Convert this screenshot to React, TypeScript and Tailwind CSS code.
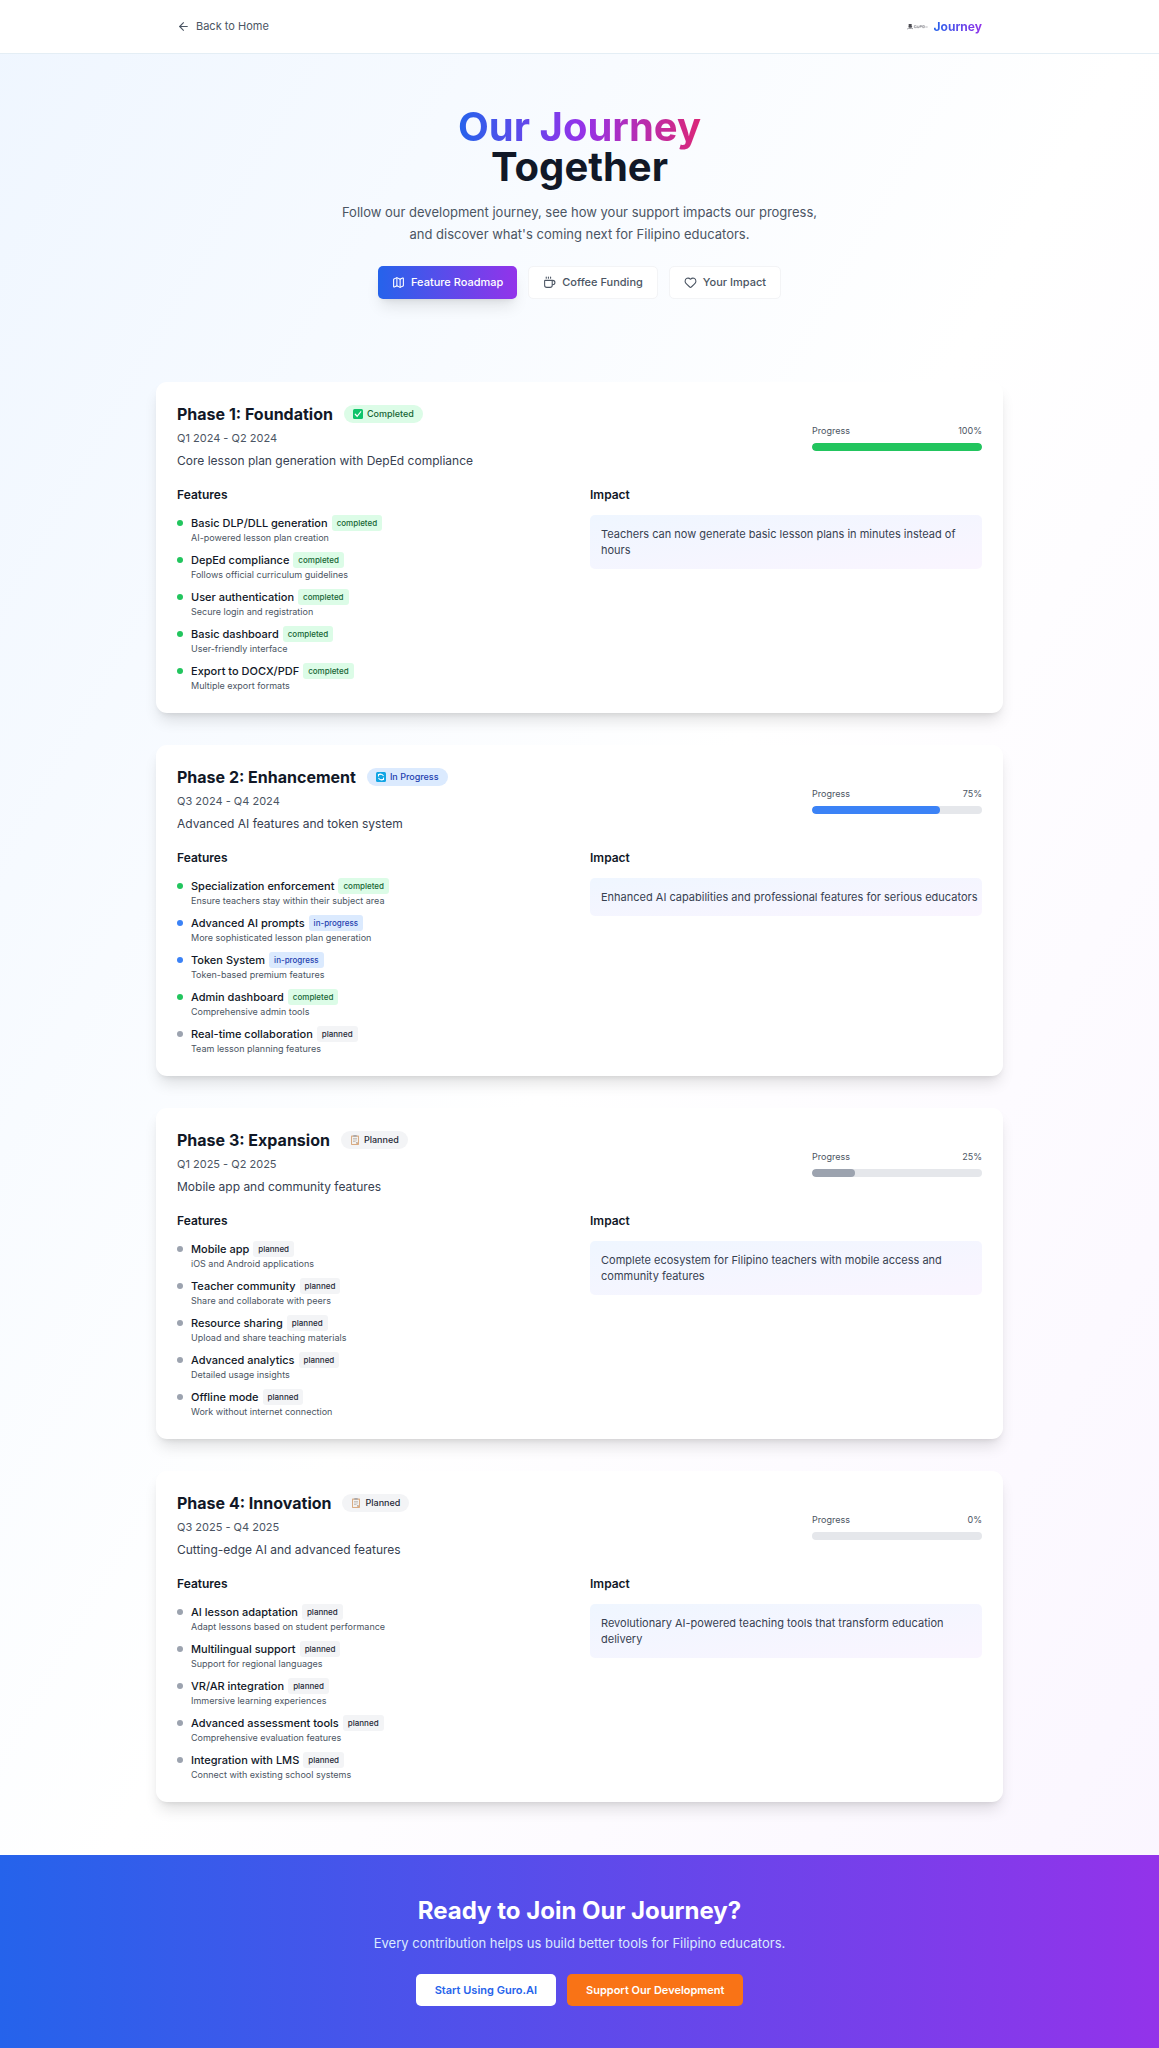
import React from "react";
import { ArrowLeft, Coffee, Heart, Map } from "lucide-react";

type Status = "completed" | "in-progress" | "planned";

interface Feature {
  name: string;
  detail: string;
  status: Status;
}

interface Phase {
  title: string;
  period: string;
  summary: string;
  status: Status;
  progress: number;
  impact: string;
  features: Feature[];
}

const phases: Phase[] = [
  {
    title: "Phase 1: Foundation",
    period: "Q1 2024 - Q2 2024",
    summary: "Core lesson plan generation with DepEd compliance",
    status: "completed",
    progress: 100,
    impact: "Teachers can now generate basic lesson plans in minutes instead of hours",
    features: [
      { name: "Basic DLP/DLL generation", detail: "AI-powered lesson plan creation", status: "completed" },
      { name: "DepEd compliance", detail: "Follows official curriculum guidelines", status: "completed" },
      { name: "User authentication", detail: "Secure login and registration", status: "completed" },
      { name: "Basic dashboard", detail: "User-friendly interface", status: "completed" },
      { name: "Export to DOCX/PDF", detail: "Multiple export formats", status: "completed" },
    ],
  },
  {
    title: "Phase 2: Enhancement",
    period: "Q3 2024 - Q4 2024",
    summary: "Advanced AI features and token system",
    status: "in-progress",
    progress: 75,
    impact: "Enhanced AI capabilities and professional features for serious educators",
    features: [
      { name: "Specialization enforcement", detail: "Ensure teachers stay within their subject area", status: "completed" },
      { name: "Advanced AI prompts", detail: "More sophisticated lesson plan generation", status: "in-progress" },
      { name: "Token System", detail: "Token-based premium features", status: "in-progress" },
      { name: "Admin dashboard", detail: "Comprehensive admin tools", status: "completed" },
      { name: "Real-time collaboration", detail: "Team lesson planning features", status: "planned" },
    ],
  },
  {
    title: "Phase 3: Expansion",
    period: "Q1 2025 - Q2 2025",
    summary: "Mobile app and community features",
    status: "planned",
    progress: 25,
    impact: "Complete ecosystem for Filipino teachers with mobile access and community features",
    features: [
      { name: "Mobile app", detail: "iOS and Android applications", status: "planned" },
      { name: "Teacher community", detail: "Share and collaborate with peers", status: "planned" },
      { name: "Resource sharing", detail: "Upload and share teaching materials", status: "planned" },
      { name: "Advanced analytics", detail: "Detailed usage insights", status: "planned" },
      { name: "Offline mode", detail: "Work without internet connection", status: "planned" },
    ],
  },
  {
    title: "Phase 4: Innovation",
    period: "Q3 2025 - Q4 2025",
    summary: "Cutting-edge AI and advanced features",
    status: "planned",
    progress: 0,
    impact: "Revolutionary AI-powered teaching tools that transform education delivery",
    features: [
      { name: "AI lesson adaptation", detail: "Adapt lessons based on student performance", status: "planned" },
      { name: "Multilingual support", detail: "Support for regional languages", status: "planned" },
      { name: "VR/AR integration", detail: "Immersive learning experiences", status: "planned" },
      { name: "Advanced assessment tools", detail: "Comprehensive evaluation features", status: "planned" },
      { name: "Integration with LMS", detail: "Connect with existing school systems", status: "planned" },
    ],
  },
];

const tone: Record<Status, { label: string; badge: string; fill: string; dot: string }> = {
  completed: { label: "Completed", badge: "bg-[#dcfce7] text-[#166534]", fill: "bg-[#22c55e]", dot: "bg-[#22c55e]" },
  "in-progress": { label: "In Progress", badge: "bg-[#dbeafe] text-[#1e40af]", fill: "bg-[#3b82f6]", dot: "bg-[#3b82f6]" },
  planned: { label: "Planned", badge: "bg-[#f3f4f6] text-[#1f2937]", fill: "bg-[#9ca3af]", dot: "bg-[#9ca3af]" },
};

function StatusIcon({ status }: { status: Status }) {
  if (status === "completed") {
    return (
      <svg viewBox="0 0 20 20" className="size-[10px]" aria-hidden="true">
        <rect width="20" height="20" rx="3" fill="#0fc46a" />
        <path d="M4.500 10.500l3.800 4L15.500 5.500" fill="none" stroke="#fff" strokeWidth="2.400" strokeLinecap="round" />
      </svg>
    );
  }
  if (status === "in-progress") {
    return (
      <svg viewBox="0 0 20 20" className="size-[10px]" aria-hidden="true">
        <rect width="20" height="20" rx="3" fill="#12a5e4" />
        <path d="M5 9V5h4M5 5.500A7 7 0 0 1 15 8M15 11v4h-4M15 14.500A7 7 0 0 1 5 12" fill="none" stroke="#fff" strokeWidth="2.200" />
      </svg>
    );
  }
  return (
    <svg viewBox="0 0 20 20" className="size-[10px]" aria-hidden="true">
      <rect x="2" y="1" width="16" height="19" rx="1.500" fill="#d9ab82" />
      <path d="M4 3.500h12V14l-4 4H4z" fill="#f4f1ee" />
      <path d="M12 18v-4h4z" fill="#b9b4b0" />
      <rect x="6.500" y="0" width="7" height="3.500" rx="1" fill="#a9a9ad" />
      <path d="M6 7h8M6 10h8M6 13h5" stroke="#9b9793" strokeWidth="1" />
    </svg>
  );
}

function BrandMark() {
  return (
    <svg viewBox="0 0 63 21" className="h-[7px] w-[21px]" role="img" aria-label="Guro.AI">
      <path d="M5 3h9v6l2 2-3 3H7l-3-3 1-2z" fill="#4b4b52" />
      <path d="M1 18c3-3 5-3 8-1 3-2 6-2 9 1" fill="none" stroke="#85858c" strokeWidth="3" />
      <path d="M22 8h6M22 8v6h6v-3M31 8v6h5V8M39 14V8h5v3h-5M47 8h5v6h-5z" fill="none" stroke="#85858c" strokeWidth="2" />
      <path d="M55 12h7" stroke="#99999f" strokeWidth="2" />
    </svg>
  );
}

function PhaseCard({ phase }: { phase: Phase }) {
  const t = tone[phase.status];
  return (
    <article className="rounded-[11px] bg-white p-[21px] shadow-[0_10px_15px_-3px_rgba(0,0,0,0.12),0_4px_6px_-4px_rgba(0,0,0,0.12)]">
      <div className="flex flex-wrap items-center justify-between gap-4">
        <div>
          <div className="flex items-center gap-[11px]">
            <h2 className="text-[16px] leading-[22px] font-bold text-[#111827]">{phase.title}</h2>
            <span className={`flex h-[18px] items-center gap-1 rounded-full px-[9px] text-[9px] font-medium ${t.badge}`}>
              <StatusIcon status={phase.status} />
              {t.label}
            </span>
          </div>
          <p className="mt-[5px] text-[11px] leading-4 text-[#4b5563]">{phase.period}</p>
          <p className="mt-[5px] text-[12px] leading-5 text-[#374151]">{phase.summary}</p>
        </div>
        <div className="w-[170px]">
          <div className="mb-[5px] flex justify-between text-[9px] leading-[14px] text-[#4b5563]">
            <span>Progress</span>
            <span>{phase.progress}%</span>
          </div>
          <div
            role="progressbar"
            aria-label={`${phase.title} progress`}
            aria-valuenow={phase.progress}
            className="h-2 overflow-hidden rounded-full bg-[#e5e7eb]"
          >
            <div className={`h-full rounded-full ${t.fill}`} style={{ width: `${phase.progress}%` }} />
          </div>
        </div>
      </div>

      <div className="mt-[15px] grid gap-[21px] md:grid-cols-2">
        <section>
          <h3 className="text-[12px] leading-[18px] font-semibold text-[#111827]">Features</h3>
          <ul className="mt-[11px] flex flex-col gap-2">
            {phase.features.map((f) => (
              <li key={f.name} className="flex gap-2">
                <span className={`mt-[5px] size-[6px] shrink-0 rounded-full ${tone[f.status].dot}`} />
                <div>
                  <div className="flex items-center gap-1">
                    <span className="text-[11px] leading-4 font-medium text-[#111827]">{f.name}</span>
                    <span className={`rounded-[3px] px-[5px] text-[8px] leading-4 font-medium ${tone[f.status].badge}`}>
                      {f.status}
                    </span>
                  </div>
                  <p className="text-[9px] leading-[13px] text-[#4b5563]">{f.detail}</p>
                </div>
              </li>
            ))}
          </ul>
        </section>
        <section>
          <h3 className="text-[12px] leading-[18px] font-semibold text-[#111827]">Impact</h3>
          <p className="mt-[11px] rounded-[5px] bg-linear-to-br/srgb from-[#eff6ff] to-[#faf5ff] py-[11px] pr-1 pl-[11px] text-[11px] leading-4 text-[#374151]">
            {phase.impact}
          </p>
        </section>
      </div>
    </article>
  );
}

export default function App() {
  return (
    <div className="min-h-screen bg-linear-to-br/srgb from-[#eff6ff] via-white to-[#faf5ff] font-['Inter',sans-serif] text-[#111827]">
      <header className="border-b border-[#e4eef5] bg-white">
        <div className="mx-auto flex h-[53px] max-w-[847px] items-center justify-between px-[21px]">
          <a href="#home" className="flex items-center gap-[6px] text-[11px] text-[#4b5563]">
            <ArrowLeft className="size-[13px]" />
            Back to Home
          </a>
          <div className="flex items-center gap-[6px]">
            <BrandMark />
            <span className="bg-linear-to-r/srgb from-[#2563eb] to-[#9333ea] bg-clip-text text-[12px] font-bold text-transparent">
              Journey
            </span>
          </div>
        </div>
      </header>

      <main>
        <section className="px-4 pt-[53px] pb-[83px] text-center">
          <h1 className="text-[40px] leading-10 font-bold">
            <span className="bg-linear-to-r/srgb from-[#2563eb] via-[#9333ea] to-[#db2777] bg-clip-text text-transparent">
              Our Journey
            </span>
            <span className="block">Together</span>
          </h1>
          <p className="mx-auto mt-[14px] max-w-[500px] text-[13px] leading-[22px] text-[#4b5563]">
            Follow our development journey, see how your support impacts our progress, and discover what's coming next for
            Filipino educators.
          </p>
          <nav className="mt-[21px] flex flex-wrap justify-center gap-[11px]" aria-label="Journey sections">
            <button className="flex h-[33px] items-center gap-[6px] rounded-[5px] bg-linear-to-r/srgb from-[#2563eb] to-[#9333ea] px-[14px] text-[11px] font-medium text-white shadow-lg">
              <Map className="size-[13px]" />
              Feature Roadmap
            </button>
            <button className="flex h-[33px] items-center gap-[6px] rounded-[5px] border border-gray-100 bg-white px-[14px] text-[11px] font-medium text-[#4b5563]">
              <Coffee className="size-[13px]" />
              Coffee Funding
            </button>
            <button className="flex h-[33px] items-center gap-[6px] rounded-[5px] border border-gray-100 bg-white px-[14px] text-[11px] font-medium text-[#4b5563]">
              <Heart className="size-[13px]" />
              Your Impact
            </button>
          </nav>
        </section>

        <div className="mx-auto flex max-w-[847px] flex-col gap-8 pb-[53px]">
          {phases.map((p) => (
            <PhaseCard key={p.title} phase={p} />
          ))}
        </div>
      </main>

      <footer className="bg-linear-to-r/srgb from-[#2563eb] to-[#9333ea] px-4 pt-[42px] pb-[43px] text-center">
        <h2 className="text-[24px] leading-[27px] font-bold text-white">Ready to Join Our Journey?</h2>
        <p className="mt-[9px] text-[13px] leading-5 text-[#dbeafe]">
          Every contribution helps us build better tools for Filipino educators.
        </p>
        <div className="mt-[21px] flex flex-wrap justify-center gap-[11px]">
          <button className="h-8 rounded-[5px] bg-white px-[19px] text-[11px] font-semibold text-[#2563eb]">
            Start Using Guro.AI
          </button>
          <button className="h-8 rounded-[5px] bg-[#f97316] px-[19px] text-[11px] font-semibold text-white">
            Support Our Development
          </button>
        </div>
      </footer>
    </div>
  );
}
